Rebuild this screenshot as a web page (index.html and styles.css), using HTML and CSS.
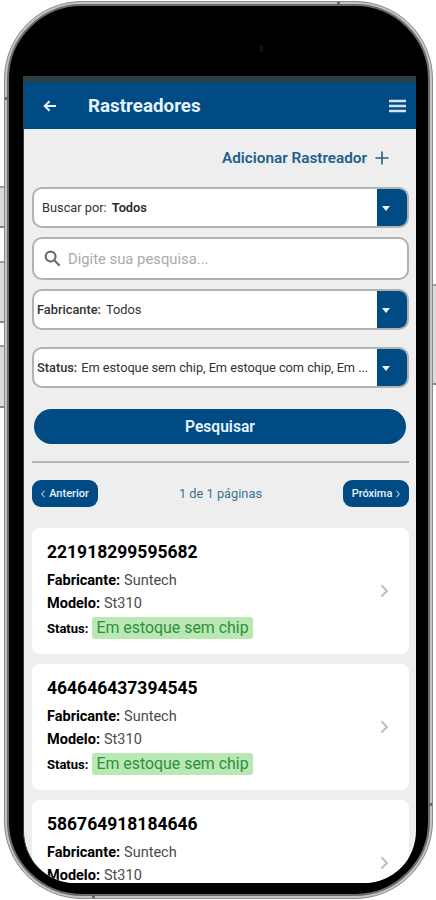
FILE: index.html
```html
<!DOCTYPE html>
<html lang="pt-BR">
<head>
    <meta charset="UTF-8">
    <meta name="viewport" content="width=device-width, initial-scale=1.0">
    <title>Rastreadores</title>
    <link rel="stylesheet" href="styles.css">
</head>
<body>
    <div class="stage">
        <!-- side buttons -->
        <i class="key key-mute"></i>
        <i class="key key-up"></i>
        <i class="key key-down"></i>
        <i class="key key-power"></i>

        <div class="phone">
            <i class="seam seam-tl"></i>
            <i class="seam seam-tr"></i>
            <i class="seam seam-bl"></i>
            <i class="seam seam-br"></i>
            <div class="bezel">
                <i class="camera"></i>
                <div class="screen">
                    <header class="topbar">
                        <svg class="back" width="14" height="12" viewBox="0 0 14 12"><path d="M13 6H2M6.5 1.2L1.7 6l4.8 4.8"/></svg>
                        <h1>Rastreadores</h1>
                        <svg class="menu" width="17" height="14" viewBox="0 0 17 14"><path d="M0 2h17M0 7h17M0 12h17"/></svg>
                    </header>

                    <main class="content">
                        <a class="add">
                            <span>Adicionar Rastreador</span>
                            <svg width="14" height="14" viewBox="0 0 14 14"><path d="M7 0.5v13M0.5 7h13"/></svg>
                        </a>

                        <div class="field select first">
                            <p><span class="label">Buscar por:</span><b>Todos</b></p>
                            <span class="arrow"></span>
                        </div>
                        <div class="field search">
                            <svg width="17" height="17" viewBox="0 0 17 17"><circle cx="6.6" cy="6.6" r="4.9"/><path d="M10.3 10.3l5.4 5.4"/></svg>
                            <span class="placeholder">Digite sua pesquisa...</span>
                        </div>
                        <div class="field select maker">
                            <p><span class="label strong">Fabricante:</span><span>Todos</span></p>
                            <span class="arrow"></span>
                        </div>
                        <div class="field select status">
                            <p><span class="label strong">Status:</span><span class="value">Em estoque sem chip, Em estoque com chip, Em ...</span></p>
                            <span class="arrow"></span>
                        </div>

                        <button class="submit">Pesquisar</button>

                        <nav class="pager">
                            <button><svg width="4" height="8" viewBox="0 0 4 8"><path d="M3.5 0.7L0.7 4l2.8 3.3"/></svg><span>Anterior</span></button>
                            <span class="page">1 de 1 páginas</span>
                            <button><span>Próxima</span><svg width="4" height="8" viewBox="0 0 4 8"><path d="M0.5 0.7L3.3 4 0.5 7.3"/></svg></button>
                        </nav>

                        <div class="list">
                            <article class="card">
                                <div class="info">
                                    <h2>221918299595682</h2>
                                    <p><b>Fabricante:</b><span>Suntech</span></p>
                                    <p><b>Modelo:</b><span>St310</span></p>
                                    <p class="state"><b>Status:</b><span class="tag">Em estoque sem chip</span></p>
                                </div>
                                <svg class="go" width="9" height="14" viewBox="0 0 9 14"><path d="M1.5 1.5L7 7l-5.5 5.5"/></svg>
                            </article>
                            <article class="card">
                                <div class="info">
                                    <h2>464646437394545</h2>
                                    <p><b>Fabricante:</b><span>Suntech</span></p>
                                    <p><b>Modelo:</b><span>St310</span></p>
                                    <p class="state"><b>Status:</b><span class="tag">Em estoque sem chip</span></p>
                                </div>
                                <svg class="go" width="9" height="14" viewBox="0 0 9 14"><path d="M1.5 1.5L7 7l-5.5 5.5"/></svg>
                            </article>
                            <article class="card">
                                <div class="info">
                                    <h2>586764918184646</h2>
                                    <p><b>Fabricante:</b><span>Suntech</span></p>
                                    <p><b>Modelo:</b><span>St310</span></p>
                                </div>
                                <svg class="go" width="9" height="14" viewBox="0 0 9 14"><path d="M1.5 1.5L7 7l-5.5 5.5"/></svg>
                            </article>
                        </div>
                    </main>
                </div>
            </div>
        </div>
    </div>
</body>
</html>
```

FILE: styles.css
```css
* {
    box-sizing: border-box;
}
body {
    margin: 0;
    background: #fff;
    font-family: Roboto, sans-serif;
    color: #333;
}
h1, h2, p {
    margin: 0;
}
svg {
    display: block;
    flex: none;
    fill: none;
    stroke: currentColor;
}
button {
    border: none;
    font-family: inherit;
    color: #e6f4ff;
    background: #004b84;
}

/* phone body */
.stage {
    position: relative;
    width: 436px;
    height: 900px;
    padding: 1px 3px 1px 4px;
    overflow: hidden;
}
.phone {
    position: relative;
    height: 898px;
    padding: 2px;
    border: 1px solid #8a8a8a;
    border-radius: 78px;
    background: #c4c4c4;
}
.bezel {
    position: relative;
    height: 892px;
    padding: 70px 12px 11px 14px;
    border: 2px solid #6c6c6c;
    border-radius: 75px;
    background: #000;
}
.camera {
    position: absolute;
    left: 251px;
    top: 39px;
    width: 3px;
    height: 7px;
    border-radius: 2px;
    background: #14141f;
}
.key {
    position: absolute;
    left: 0;
    width: 5px;
    background: #dcdcdc;
    border-top: 2px solid #999;
    border-bottom: 2px solid #888;
}
.key-mute { top: 186px; height: 42px; }
.key-up { top: 261px; height: 62px; }
.key-down { top: 345px; height: 63px; }
.key-power { left: 432px; top: 284px; height: 101px; }
.seam {
    position: absolute;
    z-index: 1;
    width: 3px;
    height: 3px;
    background: #666;
}
.seam-tl { left: 0; top: 95px; }
.seam-tr { left: 332px; top: 0; }
.seam-bl { left: 87px; bottom: 0; }
.seam-br { right: 0; bottom: 92px; }

/* app */
.screen {
    height: 807px;
    overflow: hidden;
    border-left: 1px solid #2c4448;
    border-top: 6px solid #2f3e44;
    border-radius: 0 0 52px 52px;
    background: #eeeeee;
}
.topbar {
    display: flex;
    align-items: center;
    height: 47px;
    padding: 0 10px 0 19px;
    background: #004b84;
    color: #e4f3ff;
}
.topbar h1 {
    flex: 1;
    margin-left: 31px;
    font-size: 18.8px;
    font-weight: 700;
    line-height: 24px;
}
.back {
    stroke-width: 2;
}
.menu {
    stroke-width: 2.4;
    color: #d3e5f2;
}
.content {
    padding: 0 7px 0 8px;
}
.add {
    display: flex;
    justify-content: flex-end;
    align-items: center;
    gap: 8px;
    height: 58px;
    padding-right: 20px;
    color: #20608c;
    font-size: 15.3px;
    font-weight: 600;
}
.add svg {
    stroke-width: 1.6;
}
.field {
    display: flex;
    border: 2px solid #b1b1b1;
    border-radius: 10px;
    background: #fff;
    height: 41px;
    overflow: hidden;
}
.select p {
    flex: 1;
    display: flex;
    align-items: center;
    gap: 5px;
    min-width: 0;
    padding-left: 3px;
    font-size: 12.8px;
    white-space: nowrap;
}
.first p {
    padding-left: 8px;
}
.first b {
    color: #2b2b2b;
    font-weight: 600;
}
.label.strong {
    font-weight: 500;
}
.status p {
    gap: 4px;
}
.value {
    letter-spacing: -0.04px;
}
.arrow {
    flex: none;
    width: 32px;
    margin: -1px -2px -1px 0;
    padding: 18px 0 0 5px;
    background: #004b84;
}
.arrow::before {
    content: "";
    display: block;
    width: 0;
    border: 4.5px solid transparent;
    border-top: 5px solid #e6f4ff;
    border-bottom: none;
}
.search {
    align-items: center;
    gap: 7px;
    height: 43px;
    margin: 9px 0;
    padding-left: 10px;
    color: #6d6d6d;
}
.search svg {
    stroke-width: 2.2;
}
.placeholder {
    color: #aaa;
    font-size: 14.8px;
}
.status {
    margin-top: 17px;
}
.submit {
    display: block;
    width: 372px;
    height: 35px;
    margin: 21px 0 17px 2px;
    padding: 0;
    border-radius: 18px;
    font-size: 15.6px;
    font-weight: 600;
}
.pager {
    display: flex;
    justify-content: space-between;
    align-items: center;
    padding: 17px 0 21px;
    border-top: 2px solid #b4b4b4;
}
.pager button {
    display: flex;
    justify-content: center;
    align-items: center;
    gap: 4px;
    width: 66px;
    height: 27px;
    padding: 0;
    border-radius: 9px;
    font-size: 11px;
    font-weight: 500;
}
.page {
    color: #3b7393;
    font-size: 12.8px;
}
.list {
    display: flex;
    flex-direction: column;
    gap: 10px;
}
.card {
    display: flex;
    justify-content: space-between;
    align-items: center;
    height: 126px;
    padding: 0 20px 0 15px;
    border-radius: 8px;
    background: #fff;
}
.info {
    align-self: flex-start;
    padding-top: 13px;
}
.card h2 {
    margin-bottom: 6px;
    color: #000;
    font-size: 17.5px;
    font-weight: 700;
    line-height: 22px;
}
.card p {
    display: flex;
    align-items: center;
    gap: 4px;
    height: 23px;
    color: #4a4a4a;
    font-size: 14.5px;
    white-space: nowrap;
}
.card b {
    color: #000;
    font-weight: 700;
}
.card .state {
    height: 26px;
}
.state b {
    font-size: 13px;
}
.tag {
    padding: 0 4px;
    border-radius: 3px;
    background: #b9e8b4;
    color: #2f8f3c;
    font-size: 15.9px;
    line-height: 22px;
}
.go {
    color: #bdbdbd;
    stroke-width: 2;
}
```
